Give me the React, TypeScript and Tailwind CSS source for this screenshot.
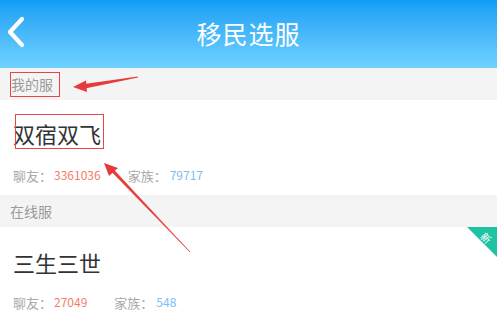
import React from "react";

const font = { fontFamily: '"Noto Sans CJK SC", "Noto Sans", sans-serif' };

function Stats({ a, b }: { a: string; b: string }) {
  return (
    <div className="flex items-center h-[20px] text-[13px] leading-none">
      <span className="text-[#a9a9a9]">聊友：</span>
      <span className="text-[#f27c68] text-[12px] ml-[2px]">{a}</span>
      <span className="text-[#a9a9a9] ml-[27px]">家族：</span>
      <span className="text-[#7dbdf2] text-[12px] ml-[3px]">{b}</span>
    </div>
  );
}

export default function App() {
  return (
    <div className="relative w-[497px] h-[312px] overflow-hidden bg-white" style={font}>
      <div className="h-[68px] bg-gradient-to-b from-[#0c9ef5] to-[#6fd2fe] flex items-center justify-center relative">
        <svg className="absolute left-[6px] top-[16px]" width="20" height="32" viewBox="0 0 20 32">
          <path d="M16 3 L4 16 L16 29" stroke="white" strokeWidth="4.2" fill="none" strokeLinecap="round" strokeLinejoin="round" />
        </svg>
        <span className="text-white text-[25px] leading-none tracking-[1px] mb-[2px]">移民选服</span>
      </div>
      <div className="h-[32px] bg-[#f4f4f4] flex items-center pl-[11px] text-[14px] text-[#9a9a9a]">我的服</div>
      <div className="h-[95px] flex flex-col pl-[13px] pt-[20px]">
        <div className="text-[22px] leading-[26px] text-[#333]">双宿双飞</div>
        <div className="mt-[19px]"><Stats a="3361036" b="79717" /></div>
      </div>
      <div className="h-[32px] bg-[#f4f4f4] flex items-center pl-[10px] text-[14px] text-[#9a9a9a]">在线服</div>
      <div className="relative flex flex-col pl-[13px] pt-[22px]">
        <div className="text-[22px] leading-[26px] text-[#333]">三生三世</div>
        <div className="mt-[17px]"><Stats a="27049" b="548" /></div>
        <div className="absolute right-0 top-0 w-[30px] h-[30px] overflow-hidden">
          <svg width="30" height="30" viewBox="0 0 30 30" className="absolute inset-0">
            <polygon points="0,0 30,0 30,30" fill="#1fc3a4" />
          </svg>
          <span className="absolute left-[14px] top-[6px] text-white text-[10px] leading-none rotate-45">新</span>
        </div>
      </div>
      <div className="absolute left-[10px] top-[72px] w-[50px] h-[25px] border border-[#e84545]" />
      <div className="absolute left-[15px] top-[114px] w-[89px] h-[35px] border border-[#e84545]" />
      <svg className="absolute inset-0 pointer-events-none" width="497" height="312" viewBox="0 0 497 312">
        <polygon points="138,76.5 84,84 85,88.5 138,77.5" fill="#e83a3a" />
        <polygon points="73,87 86,80.5 87,92" fill="#e83a3a" />
        <polygon points="190,252 111,171 113,169 190,252" fill="#e83a3a" stroke="#e83a3a" strokeWidth="0.6" />
        <polygon points="104,163 118,168 109,176" fill="#e83a3a" />
      </svg>
    </div>
  );
}
